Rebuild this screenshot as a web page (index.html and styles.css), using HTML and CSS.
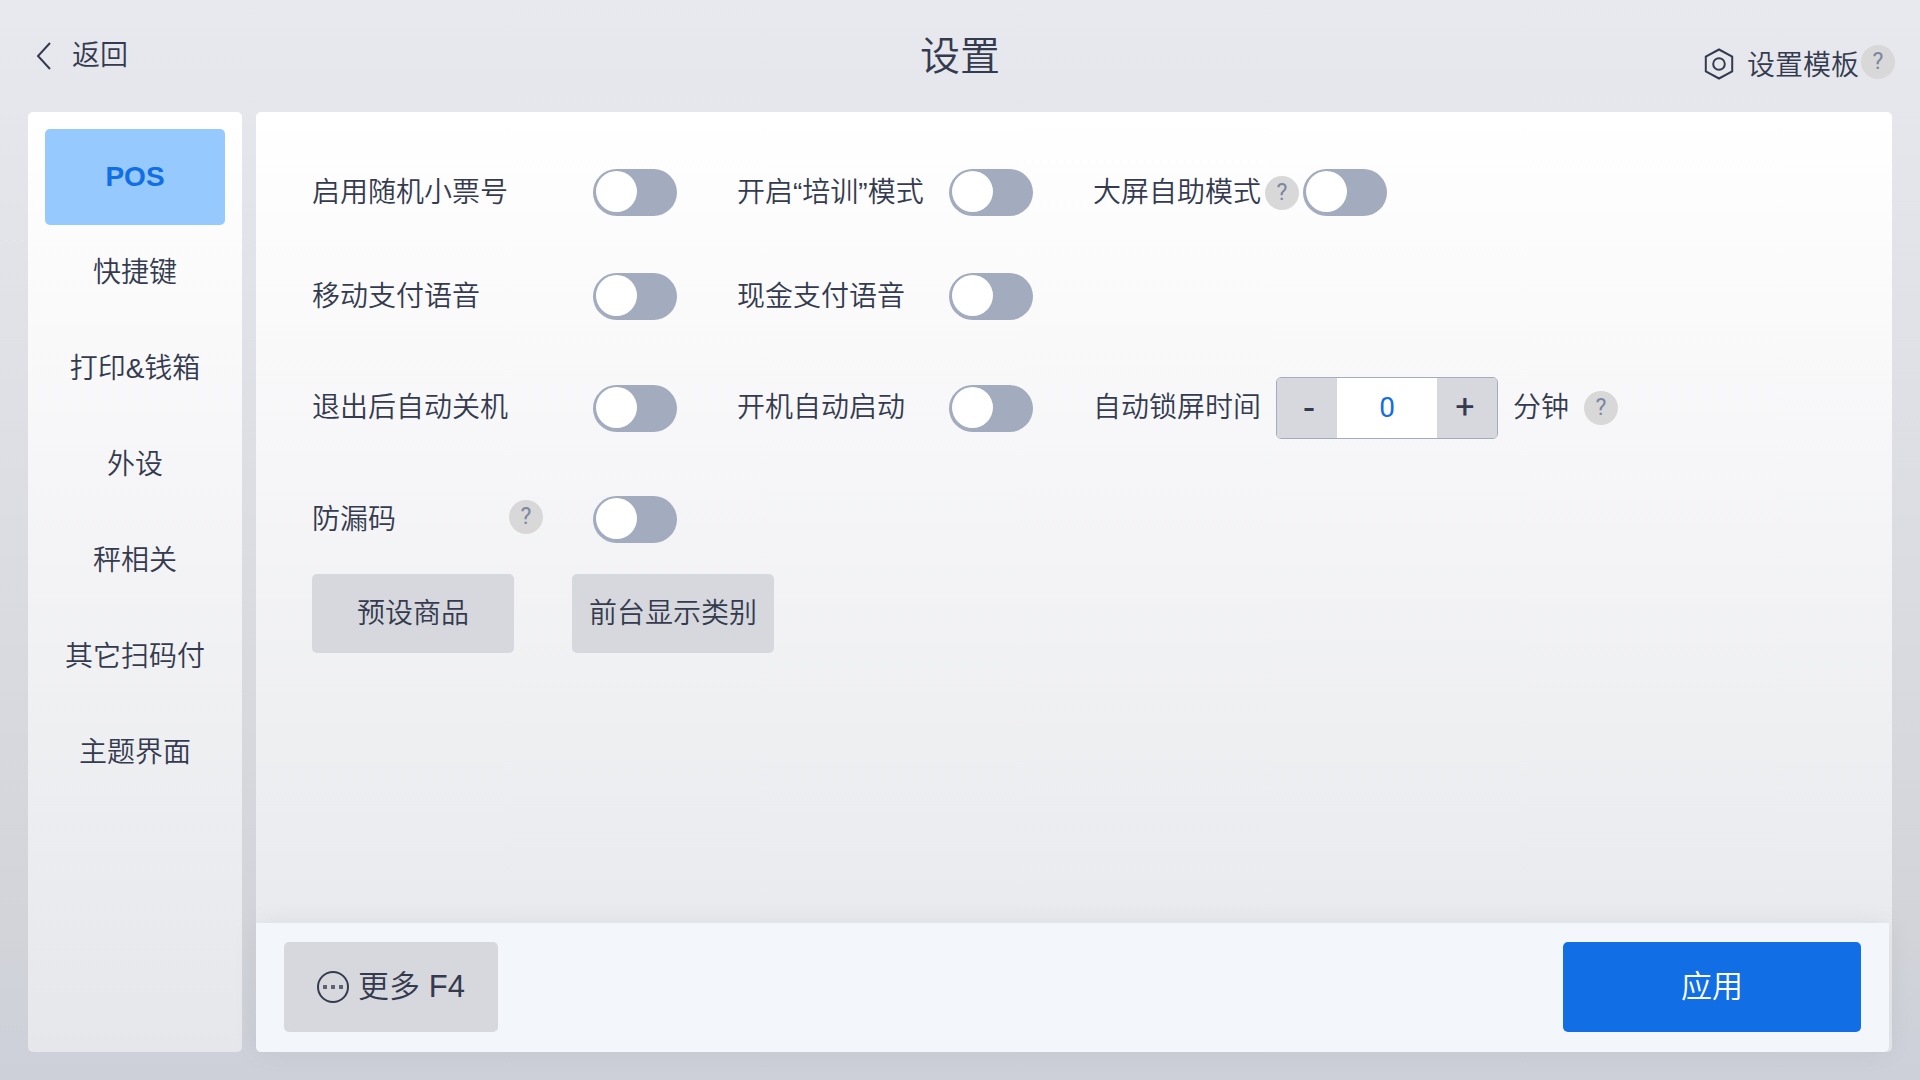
FILE: index.html
```html
<!DOCTYPE html>
<html lang="zh-CN">
<head>
    <meta charset="UTF-8">
    <title>设置</title>
    <link rel="stylesheet" href="styles.css">
</head>
<body>

    <header class="topbar">
        <button type="button" class="back">
            <svg width="15" height="28" viewBox="0 0 15 28" fill="none" stroke="#353b4f" stroke-width="2"><path d="M14 1L2 14l12 13"/></svg>
            返回
        </button>
        <h1>设置</h1>
        <div class="template">
            <a href="#">
                <svg width="30" height="32" viewBox="0 0 30 32" fill="none" stroke="#353b4f" stroke-width="2"><path d="M15 1.5L28.2 8.5v15L15 30.5 1.8 23.5v-15z"/><circle cx="15" cy="16" r="5.8"/></svg>
                设置模板
            </a>
            <button type="button" class="help">?</button>
        </div>
    </header>

    <div class="layout">
        <nav class="sidebar">
            <a href="#" class="active">POS</a>
            <a href="#">快捷键</a>
            <a href="#">打印&amp;钱箱</a>
            <a href="#">外设</a>
            <a href="#">秤相关</a>
            <a href="#">其它扫码付</a>
            <a href="#">主题界面</a>
        </nav>

        <main class="panel">
            <div class="settings">
                <div class="grid">
                    <div class="field">
                        <label for="randomNo">启用随机小票号</label>
                        <input type="checkbox" class="switch" id="randomNo">
                    </div>
                    <div class="field">
                        <label for="training">开启“培训”模式</label>
                        <input type="checkbox" class="switch" id="training">
                    </div>
                    <div class="field tight">
                        <label for="selfService">大屏自助模式</label>
                        <button type="button" class="help">?</button>
                        <input type="checkbox" class="switch" id="selfService">
                    </div>

                    <div class="field">
                        <label for="mobileVoice">移动支付语音</label>
                        <input type="checkbox" class="switch" id="mobileVoice">
                    </div>
                    <div class="field">
                        <label for="cashVoice">现金支付语音</label>
                        <input type="checkbox" class="switch" id="cashVoice">
                    </div>
                    <div></div>

                    <div class="field">
                        <label for="shutdown">退出后自动关机</label>
                        <input type="checkbox" class="switch" id="shutdown">
                    </div>
                    <div class="field">
                        <label for="autoStart">开机自动启动</label>
                        <input type="checkbox" class="switch" id="autoStart">
                    </div>
                    <div class="field lock">
                        <label for="lockTime">自动锁屏时间</label>
                        <div class="stepper">
                            <button type="button" id="minus">-</button>
                            <input type="text" id="lockTime" value="0">
                            <button type="button" id="plus">+</button>
                        </div>
                        <span>分钟</span>
                        <button type="button" class="help">?</button>
                    </div>

                    <div class="field leak">
                        <label for="leakCode">防漏码</label>
                        <button type="button" class="help">?</button>
                        <input type="checkbox" class="switch" id="leakCode">
                    </div>
                </div>

                <div class="actions">
                    <button type="button" class="btn">预设商品</button>
                    <button type="button" class="btn">前台显示类别</button>
                </div>
            </div>

            <footer class="footer">
                <button type="button" class="btn more">
                    <svg width="32" height="32" viewBox="0 0 32 32"><circle cx="16" cy="16" r="15" fill="none" stroke="#353b4f" stroke-width="2"/><g fill="#5d6272"><rect x="6" y="14" width="4" height="4"/><rect x="14" y="14" width="4" height="4"/><rect x="22" y="14" width="4" height="4"/></g></svg>
                    更多 F4
                </button>
                <button type="button" class="btn apply">应用</button>
            </footer>
        </main>
    </div>

    <script>
        const lockTime = document.getElementById('lockTime');

        function step(n) {
            const value = parseInt(lockTime.value, 10) || 0;
            lockTime.value = Math.max(0, value + n);
        }

        document.getElementById('minus').addEventListener('click', () => step(-1));
        document.getElementById('plus').addEventListener('click', () => step(1));
    </script>

</body>
</html>
```
FILE: styles.css
```css
* {
    box-sizing: border-box;
}
body {
    margin: 0;
    min-height: 100vh;
    display: flex;
    flex-direction: column;
    font-family: "Liberation Sans", "Noto Sans CJK SC", sans-serif;
    font-size: 28px;
    font-weight: 350;
    line-height: 40px;
    color: #353b4f;
    background: linear-gradient(#e8e9ee, #d4d5da 82%, #cdd0d9);
}
button, input {
    margin: 0;
    padding: 0;
    border: none;
    font: inherit;
    color: inherit;
}
button {
    background: none;
    cursor: pointer;
}
a {
    color: inherit;
    text-decoration: none;
}
svg {
    flex: none;
}

/* top bar */
.topbar {
    height: 112px;
    padding: 0 25px;
    display: grid;
    grid-template-columns: 1fr auto 1fr;
    align-items: center;
}
.back {
    justify-self: start;
    display: flex;
    align-items: center;
    gap: 21px;
    margin-left: 11px;
}
h1 {
    margin: 0;
    font-size: 40px;
    font-weight: 350;
}
.template {
    justify-self: end;
    display: flex;
    align-items: center;
    gap: 2px;
    padding-top: 20px;
}
.template a {
    display: flex;
    align-items: center;
    gap: 13px;
}
.template svg {
    margin-bottom: 4px;
}
.template .help {
    margin-bottom: 8px;
}
.help {
    flex: none;
    width: 34px;
    height: 34px;
    border-radius: 50%;
    background: #d8d8d8;
    color: #7c86a2;
    font-family: Roboto, sans-serif;
    font-size: 23px;
    font-weight: 400;
    line-height: 34px;
}

/* page body */
.layout {
    flex: 1;
    display: flex;
    gap: 14px;
    padding: 0 28px 28px;
}
.sidebar, .panel {
    border-radius: 5px;
    background: linear-gradient(#fff, #e6e7eb);
}
.sidebar {
    flex: none;
    width: 214px;
    padding: 17px;
}
.sidebar a {
    display: flex;
    align-items: center;
    justify-content: center;
    height: 96px;
    border-radius: 5px;
}
.sidebar .active {
    background: #96c9fd;
    color: #126ee4;
    font-weight: bold;
}
.panel {
    flex: 1;
    display: flex;
    flex-direction: column;
}
.settings {
    flex: 1;
    padding: 57px 56px;
}
.grid {
    display: grid;
    grid-template-columns: 365px 296px 1fr;
    gap: 57px 60px;
}
.field {
    display: flex;
    align-items: center;
    justify-content: space-between;
}
.tight {
    justify-content: flex-start;
    gap: 4px;
}
.leak .help {
    margin: 0 50px 6px auto;
}
.lock {
    justify-content: flex-start;
    gap: 15px;
}
.switch {
    appearance: none;
    flex: none;
    width: 84px;
    height: 47px;
    padding: 2px 3px;
    border-radius: 24px;
    background: #a3abbf;
    cursor: pointer;
}
.switch::before {
    content: "";
    display: block;
    width: 41px;
    height: 41px;
    border-radius: 50%;
    background: #fff;
}
.switch:checked {
    background: #126ee4;
}
.switch:checked::before {
    margin-left: auto;
}
.stepper {
    display: flex;
    width: 222px;
    height: 62px;
    border: 1px solid #a3abbf;
    border-radius: 5px;
    overflow: hidden;
}
.stepper button {
    width: 60px;
    padding: 0 4px 4px 0;
    background: #d7d8dd;
    font-family: Roboto, sans-serif;
    font-size: 34px;
    font-weight: 400;
}
.stepper button:first-child {
    padding: 0 0 0 4px;
    font-size: 38px;
}
.stepper input {
    flex: 1;
    min-width: 0;
    background: #fff;
    color: #126ee4;
    text-align: center;
    font-family: Roboto, sans-serif;
    font-weight: 400;
}
.actions {
    display: flex;
    gap: 58px;
    margin-top: 31px;
}
.btn {
    width: 202px;
    height: 79px;
    border-radius: 5px;
    background: #d7d8dd;
}

/* bottom bar */
.footer {
    display: flex;
    justify-content: space-between;
    margin-right: 3px;
    padding: 19px 28px 20px;
    border-radius: 0 0 5px 5px;
    background: #f3f6fb;
    box-shadow: 0 0 28px rgba(0, 0, 0, 0.06);
}
.footer .btn {
    height: 90px;
    font-size: 31px;
}
.footer .more {
    width: 214px;
    display: flex;
    align-items: center;
    justify-content: center;
    gap: 9px;
}
.footer .apply {
    width: 298px;
    background: #126ee4;
    color: #fff;
}
```
